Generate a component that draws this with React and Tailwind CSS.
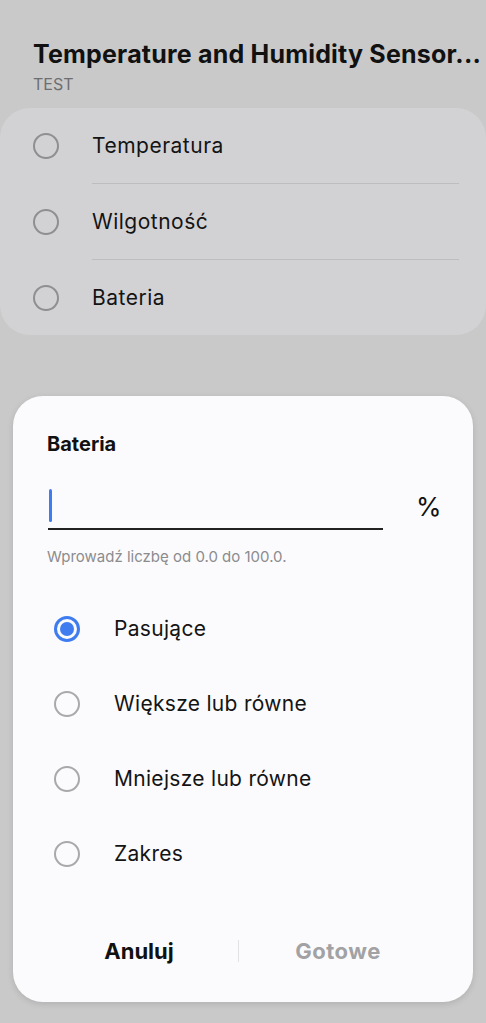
import { useState } from "react";

const sensors = ["Temperatura", "Wilgotność", "Bateria"];
const modes = ["Pasujące", "Większe lub równe", "Mniejsze lub równe", "Zakres"];

const Radio = ({ checked, dim }) => {
    if (checked) {
        return (
            <span className="w-[26px] h-[26px] rounded-full border-[3px] border-[#3f7cf0] flex items-center justify-center shrink-0">
                <span className="w-[14px] h-[14px] rounded-full bg-[#3f7cf0]"></span>
            </span>
        );
    }
    return (
        <span className={`w-[26px] h-[26px] rounded-full border-2 shrink-0 ${dim ? "border-[#8f8f91]" : "border-[#a9a9ab]"}`}></span>
    );
};

const App = () => {
    const [mode, setMode] = useState(0);

    return (
        <div className="h-[1023px] bg-[#c9c9c9] flex flex-col font-['Inter','Roboto',sans-serif] overflow-hidden">
            {/* header */}
            <div className="px-[33px] pt-[38px]">
                <h1 className="text-[25px] leading-[32px] font-bold text-[#111] whitespace-nowrap tracking-[0.2px]">
                    Temperature and Humidity Sensor...
                </h1>
                <p className="text-[16px] leading-[20px] text-[#6e6e70] mt-[4px]">TEST</p>
            </div>

            {/* sensor list (behind dialog) */}
            <div className="mt-[14px] bg-[#d2d2d4] rounded-[30px]">
                {sensors.map((s, i) => (
                    <div key={s}>
                        <div className="h-[75px] flex items-center pl-[33px] gap-[33px]">
                            <Radio dim />
                            <span className="text-[21px] tracking-[0.5px] text-[#141414]">{s}</span>
                        </div>
                        {i < sensors.length - 1 && (
                            <div className="h-px bg-[#bdbdbf] ml-[92px] mr-[27px]"></div>
                        )}
                    </div>
                ))}
            </div>

            {/* dialog */}
            <div className="mt-[61px] mx-[13px] bg-[#fbfbfd] rounded-[30px] shadow-[0_2px_6px_rgba(0,0,0,0.12)] pt-[36px] pb-[21px]">
                <h2 className="pl-[34px] text-[20px] leading-[24px] font-bold text-[#111]">Bateria</h2>

                <div className="mt-[26px] pl-[35px] flex items-center">
                    <div className="w-[335px] flex flex-col">
                        <div className="h-[46px] pt-[7px] pl-[1px]">
                            <div className="w-[3px] h-[33px] bg-[#3f7cf0] rounded-sm"></div>
                        </div>
                        <div className="h-[2px] bg-[#222]"></div>
                    </div>
                    <span className="ml-[33px] text-[26px] text-[#111]">%</span>
                </div>

                <p className="pl-[34px] mt-[17px] text-[15px] leading-[20px] text-[#8c8c8e]">
                    Wprowadź liczbę od 0.0 do 100.0.
                </p>

                <div className="mt-[24px] px-[41px]">
                    {modes.map((m, i) => (
                        <div key={m} onClick={() => setMode(i)} className="h-[75px] flex items-center gap-[34px] cursor-pointer">
                            <Radio checked={mode === i} />
                            <span className="text-[21px] tracking-[0.3px] text-[#141414]">{m}</span>
                        </div>
                    ))}
                </div>

                <div className="mt-[30px] h-[60px] flex items-center pl-[27px] pr-[36px]">
                    <button className="flex-1 text-[22px] font-bold text-[#111]">Anuluj</button>
                    <div className="w-px h-[22px] bg-[#e2e2e4]"></div>
                    <button className="flex-1 text-[22px] font-bold tracking-[0.5px] text-[#a2a2a4]">Gotowe</button>
                </div>
            </div>
        </div>
    );
};

export default App;
